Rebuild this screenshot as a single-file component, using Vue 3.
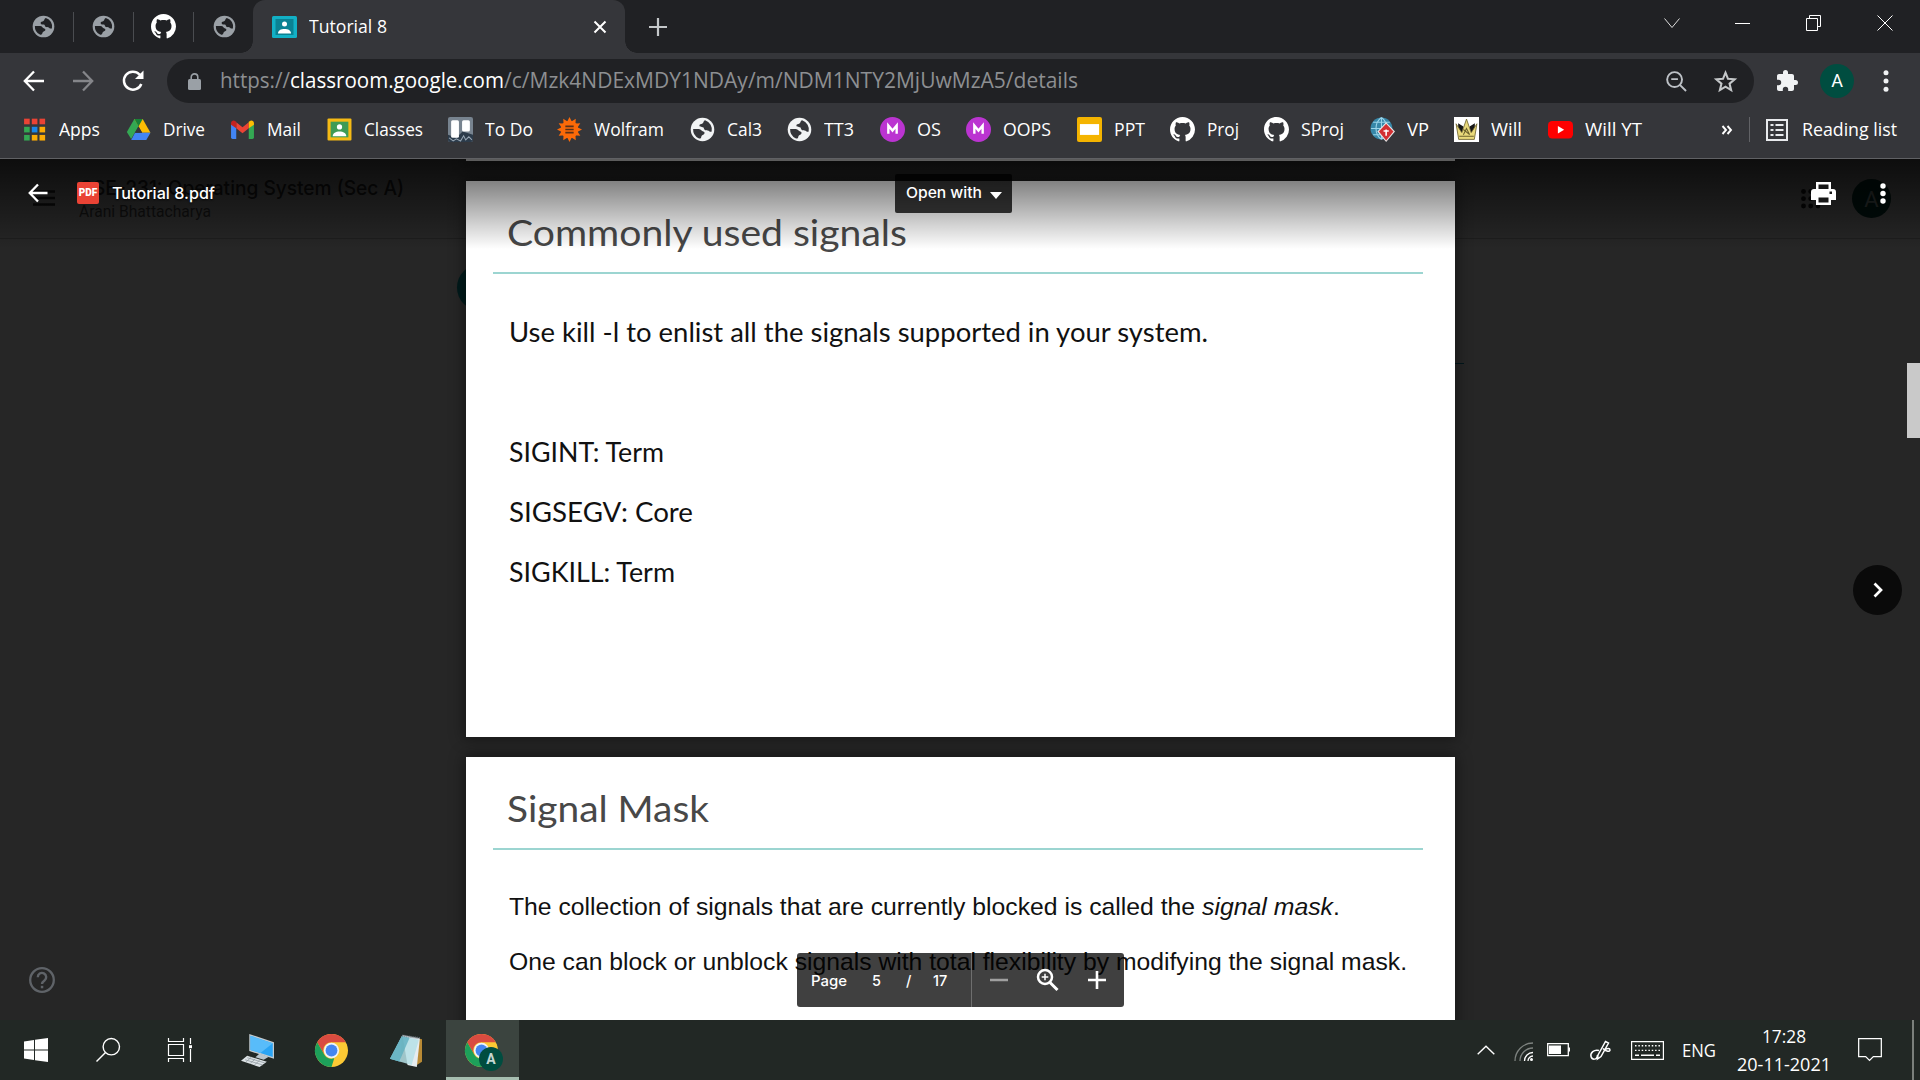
<script setup>
// Condenses or widens a label so that it takes up the given width in pixels.
const vFit = {
  mounted(el, { value }) {
    const natural = el.getBoundingClientRect().width
    el.style.width = value + 'px'
    el.style.transform = `scaleX(${value / natural})`
  },
}

const cat = 'M8 0C3.58 0 0 3.58 0 8c0 3.54 2.29 6.53 5.47 7.59.4.07.55-.17.55-.38 0-.19-.01-.82-.01-1.49-2.01.37-2.53-.49-2.69-.94-.09-.23-.48-.94-.82-1.13-.28-.15-.68-.52-.01-.53.63-.01 1.08.58 1.23.82.72 1.21 1.87.87 2.33.66.07-.52.28-.87.51-1.07-1.78-.2-3.64-.89-3.64-3.95 0-.87.31-1.59.82-2.15-.08-.2-.36-1.02.08-2.12 0 0 .67-.21 2.2.82.64-.18 1.32-.27 2-.27s1.36.09 2 .27c1.53-1.04 2.2-.82 2.2-.82.44 1.1.16 1.92.08 2.12.51.56.82 1.27.82 2.15 0 3.07-1.87 3.75-3.65 3.95.29.25.54.73.54 1.48 0 1.07-.01 1.93-.01 2.2 0 .21.15.46.55.38A8.01 8.01 0 0 0 16 8c0-4.42-3.58-8-8-8z'
const github = `<path transform="scale(1.5)" fill="#fff" d="${cat}"/>`
const globe = (c, bg) => `<circle cx="12" cy="12" r="11.300" fill="${c}"/><path fill="${bg}" d="M14.500 3.200A9.200 9.200 0 0 1 20.800 14c-1.300.6-2.300-.2-3-.8-1-.8-2.800-.2-3.800-1-.9-.9-.4-2.300-1.700-2.400-1.500-.1-3 .2-3.300-1.300C8.800 7 10.700 7 12 6.300c1.200-.7.8-2.800 2.500-3.100z"/><path fill="${bg}" d="M3 11.500h5.500c2.300 0 2.600 2.300 4.200 2.500 1.700.2 1.600 2.200.4 2.800-1.500.7-2 1-2.300 2.300-.2 1.300-1.300 1.900-2.600 1.200A9.300 9.300 0 0 1 3 11.500z"/>`
const meet = '<circle cx="12" cy="12" r="12" fill="#bb34d1"/><path d="M8 16V8.200L12 13l4-4.800V16" fill="none" stroke="#fff" stroke-width="2.300"/>'
const chrome = '<circle cx="12" cy="12" r="12" fill="#fcc934"/><path fill="#d94b40" d="M1.600 6A12 12 0 0 1 22.400 6H12a6 6 0 0 0-5.200 9z"/><path fill="#1da05a" d="M1.600 6 6.800 15a6 6 0 0 0 7.200 2.700L12 24A12 12 0 0 1 1.600 6z"/><circle cx="12" cy="12" r="5.600" fill="#f1f3f4"/><circle cx="12" cy="12" r="4.300" fill="#4586f0"/>'
const wolf = Array.from({ length: 12 }, (_, i) => `<path d="M9 6 12 0l3 6z" transform="rotate(${i * 30} 12 12)"/>`).join('')

const bookmarks = [
  { name: 'Apps', width: 104, text: 41, icon: ['#ea4335', '#34a853', '#34a853'].map((c, r) => [c, ['#ea4335', '#1a86e8', '#fbab05'][r], ['#ea4335', '#fbab05', '#fbab05'][r]].map((f, k) => `<rect x="${2 + k * 7.4}" y="${1.600 + r * 7.800}" width="5.400" height="5.400" fill="${f}"/>`).join('')).join('') },
  { name: 'Drive', width: 104, text: 42, icon: '<path fill="#34a853" d="M8 2h8L5 21 .8 14.500z"/><path fill="#fbbc04" d="M8 2h8l7.500 13h-8z"/><path fill="#4285f4" d="M8.700 15h14.800l-4 7H5z"/><path fill="#35363a" d="m12 9 3.500 6H8.600z"/><path fill="#188038" d="M8 2h8l-4 7z"/>' },
  { name: 'Mail', width: 97, text: 34, icon: '<path fill="#4285f4" d="M1 6.500 6 10v11H2.500A1.500 1.500 0 0 1 1 19.500z"/><path fill="#34a853" d="M18 10l5-3.500v13a1.500 1.500 0 0 1-1.500 1.500H18z"/><path fill="#ea4335" d="m6 5 6 4.800L18 5v5.800l-6 4.800-6-4.800z"/><path fill="#c5221f" d="M1 6c0-2.400 2.500-3.300 4.200-2L6 4.600v6.200L1 7.500z"/><path fill="#fbbc04" d="M23 6c0-2.400-2.500-3.300-4.200-2l-.8.6v6.200l5-3.300z"/>' },
  { name: 'Classes', width: 121, text: 59, icon: '<rect x=".5" y="1.500" width="23" height="21" rx="1" fill="#f5ba15"/><rect x="3.500" y="4.500" width="17" height="15" fill="#3f9b56"/><circle cx="12" cy="9.500" r="2.500" fill="#fff"/><path fill="#fff" d="M5.500 18.500c0-3 3-4.500 6.500-4.500s6.500 1.500 6.500 4.500z"/>' },
  { name: 'To Do', width: 109, text: 48, icon: '<rect width="24" height="24" rx="2" fill="#77838f"/><path fill="#2c3b4a" d="M0 17 8 20 14 14l10 3v5a2 2 0 0 1-2 2H2a2 2 0 0 1-2-2z"/><path d="m1 20 4 3 3-2 4 2 3-5 2 4 3-3 3 3" stroke="#96a5b3" fill="none"/><rect x="3" y="3" width="7.500" height="17" rx="1.500" fill="#fff"/><rect x="13.500" y="3" width="7.500" height="11" rx="1.500" fill="#fff"/>' },
  { name: 'Wolfram', width: 133, text: 70, icon: `<g fill="#fb6a09"><circle cx="12" cy="12" r="8.500"/>${wolf}</g><path d="M8 9h8M8 12h8M8 15h8" stroke="#5a3118" stroke-width="1.500"/>` },
  { name: 'Cal3', width: 97, text: 35, icon: globe('#f1f3f4', '#35363a') },
  { name: 'TT3', width: 93, text: 30, icon: globe('#f1f3f4', '#35363a') },
  { name: 'OS', width: 86, text: 24, icon: meet },
  { name: 'OOPS', width: 111, text: 48, icon: meet },
  { name: 'PPT', width: 93, text: 31, icon: '<rect width="24" height="24" rx="2" fill="#f4b400"/><rect x="2.800" y="6.800" width="18.400" height="10.400" fill="#fff"/>' },
  { name: 'Proj', width: 94, text: 32, icon: github },
  { name: 'SProj', width: 106, text: 43, icon: github },
  { name: 'VP', width: 84, text: 22, icon: '<circle cx="11" cy="11" r="10.500" fill="#3787a8"/><path d="M1 11h20M11 .5v21M3 5h16M3 17h16M11 .5c-7 5-7 16 0 21M11 .5c7 5 7 16 0 21" fill="none" stroke="#9bd5ea"/><path fill="#e8e8e8" d="m15.500 5 8.500 9-8.500 10L7 14z"/><path fill="#d22f32" d="m15.500 6.500 7 7.500-7 8.500-7-8.500z"/><path d="M15.500 18v-6m-2.500 1.500h5" stroke="#fff" stroke-width="1.500"/>' },
  { name: 'Will', width: 94, text: 31, icon: '<path fill="#fff" d="M0 0h24v24H0z"/><path fill="#171717" d="m4 6 5 3-1 6-4-2zM20 6l-5 3 1 6 4-2z"/><path fill="#eada7b" stroke="#6c622c" stroke-width=".8" d="M2 6.500 7.500 15 12 2l4.500 13L22 6.500 19.500 21.500h-15z"/><path d="M5 18.500h14M9 17l3-6 3 6m-6-5 6 5" stroke="#6c622c" fill="none"/>' },
  { name: 'Will YT', width: 130, text: 57, icon: '<rect y="3.800" width="24" height="16.800" rx="4" fill="#f00"/><path fill="#fff" d="m9.500 8.600 6 3.600-6 3.600z"/>' },
]

const pinned = [
  { icon: globe('#9aa0a6', '#202124') },
  { icon: globe('#9aa0a6', '#202124') },
  { icon: github },
  { icon: globe('#9aa0a6', '#202124') },
]

const signals = [
  { text: 'Use kill -l to enlist all the signals supported in your system.', width: 699 },
  { text: '\u00a0', width: 8 },
  { text: 'SIGINT: Term', width: 155 },
  { text: 'SIGSEGV: Core', width: 184 },
  { text: 'SIGKILL: Term', width: 166 },
]
</script>

<template>
  <div class="screen">
    <header class="browser">
      <div class="tabs">
        <div class="pins">
          <div v-for="(p, i) in pinned" :key="i" class="pin">
            <svg :class="{ big: i === 2 }" viewBox="0 0 24 24" v-html="p.icon" />
          </div>
        </div>
        <div class="tab">
          <svg class="fav" viewBox="0 0 25 22"><rect width="25" height="22" rx="1.500" fill="#12b0c5" /><rect x="3.500" y="3" width="18" height="16" fill="#0a8293" /><circle cx="12.500" cy="8" r="2.500" fill="#fff" /><path d="M6 17.500c0-3.300 3-4.500 6.500-4.500s6.500 1.200 6.500 4.500z" fill="#fff" /></svg>
          <span v-fit="78" class="tab-title">Tutorial 8</span>
          <svg class="tab-x" viewBox="0 0 14 14"><path d="m1.500 1.500 11 11m0-11-11 11" stroke="#fff" stroke-width="2" /></svg>
        </div>
        <svg class="plus" viewBox="0 0 18 18"><path d="M9 0v18M0 9h18" stroke="#c4c7c9" stroke-width="2.200" /></svg>
        <div class="window">
          <svg viewBox="0 0 16 16"><path d="m.5 3.500 7.500 9 7.500-9" fill="none" stroke="#ddd" /></svg>
          <svg viewBox="0 0 16 16"><path d="M0 8.500h15" stroke="#fff" /></svg>
          <svg viewBox="0 0 16 16"><path d="M.5 3.500h11v12H.500zM3.500 3.500v-3h11v11h-3" fill="none" stroke="#fff" /></svg>
          <svg viewBox="0 0 16 16"><path d="m.5.5 15 15m0-15-15 15" stroke="#fff" /></svg>
        </div>
      </div>

      <div class="toolbar">
        <div class="nav">
          <svg viewBox="0 0 24 24"><path d="M22 12H3m9-9.500L2.800 12l9.200 9.500" fill="none" stroke="#fff" stroke-width="2.300" /></svg>
          <svg viewBox="0 0 24 24"><path d="M2 12h19m-9-9.500 9.200 9.500-9.200 9.500" fill="none" stroke="#85868a" stroke-width="2.300" /></svg>
          <svg viewBox="-1 0 24 24"><path d="M20.300 15A9 9 0 1 1 18.500 5.500l2 2" fill="none" stroke="#fff" stroke-width="2.500" /><path d="M22.500 1.500V10H14z" fill="#fff" /></svg>
        </div>
        <div class="omnibox">
          <svg class="lock" viewBox="0 0 13 17"><rect y="6" width="13" height="11" rx="1.500" fill="#9aa0a6" /><path d="M3.200 7V4.200a3.300 3.300 0 0 1 6.600 0V7" fill="none" stroke="#9aa0a6" stroke-width="1.600" /></svg>
          <div class="url"><span v-fit="70">https://</span><span v-fit="214" class="host">classroom.google.com</span><span v-fit="574">/c/Mzk4NDExMDY1NDAy/m/NDM1NTY2MjUwMzA5/details</span></div>
          <svg class="ob-icon" viewBox="0 0 22 22"><circle cx="9" cy="9" r="7.800" fill="none" stroke="#bdc1c6" stroke-width="2" /><path d="m14.500 14.500 6.500 6.500M5.500 8.500h7" stroke="#bdc1c6" stroke-width="2" /></svg>
          <svg class="star" viewBox="0 0 24 24"><path d="m12 3.500 2.400 5.900 6.400.5-4.900 4.200 1.500 6.200-5.400-3.300-5.400 3.300 1.500-6.200-4.900-4.200 6.400-.5z" fill="none" stroke="#c4c7c9" stroke-width="2" /></svg>
        </div>
        <svg class="puzzle" viewBox="1 1 22 22"><path fill="#f1f3f4" d="M20.500 11H19V7c0-1.100-.9-2-2-2h-4V3.500a2.500 2.500 0 0 0-5 0V5H4c-1.100 0-1.990.9-1.990 2v3.800H3.500a2.700 2.700 0 0 1 0 5.400H2V20c0 1.100.9 2 2 2h3.800v-1.500a2.700 2.700 0 0 1 5.400 0V22H17c1.100 0 2-.9 2-2v-4h1.500a2.500 2.500 0 0 0 0-5z" /></svg>
        <div class="avatar">A</div>
        <svg class="kebab" viewBox="0 0 6 22"><circle cx="3" cy="2.800" r="2.500" /><circle cx="3" cy="11" r="2.500" /><circle cx="3" cy="19.200" r="2.500" /></svg>
      </div>

      <div class="bookmarks">
        <div v-for="b in bookmarks" :key="b.name" class="bm" :style="{ width: b.width + 'px' }">
          <svg viewBox="0 0 24 24" v-html="b.icon" />
          <span v-fit="b.text">{{ b.name }}</span>
        </div>
        <svg class="more" viewBox="0 0 12 12"><path d="m1.500 2 3.500 4-3.500 4M6.500 2l3.500 4-3.500 4" fill="none" stroke="#fff" stroke-width="1.900" /></svg>
        <i class="bm-sep" />
        <svg class="list" viewBox="0 0 22 22"><path d="M1 1h20v20H1z" fill="none" stroke="#e8eaed" stroke-width="2" /><path d="M4.500 6h3m2 0h8m-13 5h3m2 0h8m-13 5h3m2 0h8" stroke="#e8eaed" stroke-width="2" /></svg>
        <span v-fit="95">Reading list</span>
      </div>
    </header>

    <main class="viewer">
      <div class="ghost-line" />
      <div class="ghost-disc" />
      <div class="ghost-dash" />
      <svg class="ghost-menu" viewBox="0 0 22 16"><path d="M0 1.500h22M0 8h22M0 14.500h22" stroke="#080808" stroke-width="2.600" /></svg>
      <div class="ghost-title"><span v-fit="325">CSE-231: Operating System (Sec A)</span></div>
      <div class="ghost-name"><span v-fit="132">Arani Bhattacharya</span></div>
      <svg class="ghost-apps" viewBox="0 0 20 20"><g fill="#050505"><template v-for="y in [2.500, 9.700, 17]" :key="y"><circle v-for="x in [2.500, 9.700, 17]" :key="x" :cx="x" :cy="y" r="2.400" /></template></g></svg>
      <div class="ghost-avatar">A</div>

      <div class="pages">
        <section class="page sliver" />
        <section class="page">
          <h1><span v-fit="400">Commonly used signals</span></h1>
          <hr>
          <div class="lines">
            <p v-for="s in signals" :key="s.text"><span v-fit="s.width">{{ s.text }}</span></p>
          </div>
        </section>
        <section class="page">
          <h1><span v-fit="202">Signal Mask</span></h1>
          <hr>
          <div class="lines arial">
            <p><span v-fit="693">The collection of signals that are currently blocked is called the&nbsp;</span><em v-fit="131">signal mask</em>.</p>
            <p><span v-fit="898">One can block or unblock signals with total flexibility by modifying the signal mask.</span></p>
          </div>
        </section>
      </div>

      <div class="shade" />
      <div class="file">
        <svg class="back" viewBox="0 0 21 20"><path d="M20.500 10H2m8.500-9L1.800 10l8.700 9" fill="none" stroke="#fff" stroke-width="2.400" /></svg>
        <span class="pdf">PDF</span>
        <span v-fit="103" class="file-name">Tutorial 8.pdf</span>
      </div>
      <div class="open"><span v-fit="76">Open with</span><i /></div>
      <svg class="print" viewBox="0 0 25 23"><path fill="#fff" d="M5 0h15v7h2a3 3 0 0 1 3 3v8h-5v5H5v-5H0v-8a3 3 0 0 1 3-3h2z" /><path fill="#171717" d="M7.500 2.500h10V7h-10zM7.500 15.500h10v5h-10zM18.500 9.500h2.500v2.500h-2.500z" /></svg>
      <svg class="dots" viewBox="0 0 6 22"><circle cx="3" cy="3" r="2.700" /><circle cx="3" cy="10.500" r="2.700" /><circle cx="3" cy="18" r="2.700" /></svg>

      <div class="next"><svg viewBox="0 0 10 16"><path d="m1.500 1.500 6.500 6.500-6.500 6.500" fill="none" stroke="#fff" stroke-width="2.700" /></svg></div>
      <div class="thumb" />
      <svg class="help" viewBox="0 0 26 26"><circle cx="13" cy="13" r="11.800" fill="none" stroke="#5f6368" stroke-width="2.300" /><path d="M8.800 10.200a4.200 4.200 0 1 1 6.700 3.300C14 14.600 13 15.200 13 17" fill="none" stroke="#5f6368" stroke-width="2.400" /><path d="M11.800 18.800h2.500v2.500h-2.500z" fill="#5f6368" /></svg>

      <div class="pager">
        <div class="pager-nums"><span v-fit="36" class="w1">Page</span><span class="w2">5</span><span class="w3">/</span><span class="w4">17</span></div>
        <div class="pager-zoom">
          <svg viewBox="0 0 24 24"><path d="M3 12h18" stroke="#a0a0a0" stroke-width="2.500" /></svg>
          <svg viewBox="0 0 24 24"><circle cx="9" cy="9" r="7" fill="none" stroke="#fff" stroke-width="2.500" /><path d="m14 14.500 7.500 7.500" stroke="#fff" stroke-width="3" /><path d="M9 5.700v6.600M5.700 9h6.600" stroke="#fff" stroke-width="1.500" /></svg>
          <svg viewBox="0 0 24 24"><path d="M3 12h18M12 3v18" stroke="#fff" stroke-width="2.600" /></svg>
        </div>
      </div>
    </main>

    <footer class="taskbar">
      <div class="apps">
        <div class="app"><svg viewBox="0 0 24 24"><path fill="#fff" d="M0 3.500 10 2v9.500H0zM11 1.800 24 0v11.500H11zM0 12.500h10V22L0 20.500zM11 12.500h13V24l-13-1.800z" /></svg></div>
        <div class="app"><svg viewBox="0 0 24 24"><circle cx="15.300" cy="8.700" r="8.200" fill="none" stroke="#fff" stroke-width="1.400" /><path d="M9.500 14.500.5 23.500" stroke="#fff" stroke-width="1.500" /></svg></div>
        <div class="app"><svg viewBox="0 0 24 24"><path d="M.5 0v3.500h15V0M.5 6.500h15v11H.500zM.5 24v-3.500h15V24M22.500 0v6M22.500 11v13" fill="none" stroke="#fff" stroke-width="1.200" /><path d="M21 7.200h3v3h-3z" fill="#fff" /></svg></div>
        <div class="app wide"><svg viewBox="0 0 32 32"><path fill="#c2cacf" d="m8 0 24 8v16L8 16.500z" /><path fill="#2aa4f4" d="m9.200 1.700 21.600 7.200v13.500L9.200 15.400z" /><path fill="#58bcfa" d="m9.200 1.700 21.600 7.200-12 9.500-9.600-3z" /><path fill="#bac5cc" d="m18 19 9 3-5 3-8-2.500z" /><path fill="#dde3e6" d="m6 21 19 6-7 5L0 26z" /><path d="m4 25 17 5M6 23l17 5M10 22.500 5 27m9-3-5 4.500m9-3-5 4.500" stroke="#8d979d" stroke-width=".7" /></svg></div>
        <div class="app wide"><svg viewBox="0 0 24 24" v-html="chrome" /></div>
        <div class="app wide"><svg viewBox="0 0 32 32"><path fill="#b98a35" d="m27 4 4 1v22l-5 3z" /><path fill="#e6ecef" d="m12 1 17 3-3 28-9-2z" /><path fill="#2f7f92" d="M11.500 2 0 24l10 3z" /><path fill="#b5e0e6" d="m11.500 2 16.500 3.500L21 30 0 24z" opacity=".85" /><path fill="#5eafbf" d="M11.500 2 0 24l9 2.600L19 3.600z" opacity=".8" /><path d="M12 1.500 29 4" stroke="#66717a" stroke-width="2" stroke-dasharray="1 1" /></svg></div>
        <div class="app wide current"><svg viewBox="0 0 24 24" v-html="chrome" /><b>A</b></div>
      </div>
      <div class="tray">
        <svg class="t-up" viewBox="0 0 18 10"><path d="m.7 9.300 8.300-8 8.300 8" fill="none" stroke="#fff" stroke-width="1.400" /></svg>
        <svg class="t-wifi" viewBox="0 0 19 19"><g fill="none" stroke-width="1.300"><path d="M1 19A18 18 0 0 1 19 1M6 19A13 13 0 0 1 19 6" stroke="#7d827f" /><path d="M10.500 19a8.500 8.500 0 0 1 8.500-8.500M14 19a5 5 0 0 1 5-5" stroke="#fff" /></g><circle cx="17.500" cy="17.500" r="1.500" fill="#fff" /></svg>
        <svg class="t-bat" viewBox="0 0 23 14"><path d="M.7.700h20.600v12H.700z" fill="none" stroke="#fff" stroke-width="1.300" /><path d="M2 2.500h12v8.500H2zM21.500 4.500H23v4h-1.500z" fill="#fff" /></svg>
        <svg class="t-pen" viewBox="0 0 21 21"><path d="m8 15 7.500-13.500 3 1.500L11 16.500l-3.500 2.500zM9 10.500C4 9 0 13 1 16.500s6 4 6.500-1.500M13 8.500c3 3.500 7 3.500 7 1.500 0-1.800-3-2-5 0" fill="none" stroke="#fff" stroke-width="1.500" /></svg>
        <svg class="t-kb" viewBox="0 0 33 19"><path d="M.6.600h31.800v17.800H.600z" fill="none" stroke="#fff" stroke-width="1.200" /><path d="M4 4.800h25M4 9.400h25" stroke="#fff" stroke-width="1.400" stroke-dasharray="1.500 1.850" /><path d="M4 14.200h4m2 0h13m2 0h4" stroke="#fff" stroke-width="1.400" /></svg>
        <span v-fit="34" class="eng">ENG</span>
        <div class="clock"><span v-fit="44">17:28</span><span v-fit="94">20-11-2021</span></div>
        <svg class="t-note" viewBox="0 0 25 25"><path d="M.7.700h23.600v18.600H16l-4 4-4-4H.700z" fill="none" stroke="#fff" stroke-width="1.300" /></svg>
        <i class="desk" />
      </div>
    </footer>
  </div>
</template>

<style>
body { margin: 0; background: #262626; overflow: hidden; }
</style>

<style scoped>
.screen { width: 1920px; height: 1080px; display: flex; flex-direction: column; overflow: hidden; font-family: "Open Sans", "Noto Sans", sans-serif; color: #fff; }
.screen span { display: inline-block; white-space: nowrap; transform-origin: 0 50%; flex: none; }
svg { display: block; flex: none; overflow: visible; }

.browser { height: 158px; background: #35363a; border-bottom: 1px solid #606164; flex: none; display: flex; flex-direction: column; }
.tabs { height: 53px; background: #202124; display: flex; align-items: center; flex: none; }
.pins { display: flex; width: 253px; padding-left: 14px; box-sizing: border-box; }
.pin { width: 60px; height: 30px; flex: none; display: flex; align-items: center; justify-content: center; box-sizing: border-box; border-right: 1px solid #4a4c50; }
.pin:last-child { border-right: 0; }
.pin svg { width: 23px; height: 23px; }
.pin svg.big { width: 25px; height: 25px; }
.tab { position: relative; width: 372px; height: 53px; background: #35363a; border-radius: 12px 12px 0 0; display: flex; align-items: center; box-sizing: border-box; padding: 0 18px 0 19px; flex: none; }
.tab::before, .tab::after { content: ""; position: absolute; bottom: 0; width: 12px; height: 12px; }
.tab::before { left: -12px; background: radial-gradient(circle at 0 0, #202124 11.500px, #35363a 12px); }
.tab::after { right: -12px; background: radial-gradient(circle at 100% 0, #202124 11.500px, #35363a 12px); }
.fav { width: 25px; height: 22px; }
.tab-title { font-size: 18px; margin-left: 12px; line-height: 24px; margin-top: -2px; }
.tab-x { width: 14px; height: 14px; margin-left: auto; }
.plus { width: 18px; height: 18px; margin-left: 24px; }
.window { margin-left: auto; display: flex; gap: 55px; padding-right: 27px; margin-top: -8px; }
.window svg { width: 16px; height: 16px; }

.toolbar { height: 56px; display: flex; align-items: center; flex: none; }
.nav { display: flex; width: 167px; padding-left: 22px; gap: 25px; box-sizing: border-box; }
.nav svg { width: 24px; height: 24px; }
.omnibox { width: 1587px; height: 44px; border-radius: 22px; background: #202124; display: flex; align-items: center; box-sizing: border-box; padding-left: 21px; }
.lock { width: 13px; height: 17px; margin-right: 18px; }
.url { font-size: 21.500px; line-height: 30px; color: #8d8f92; display: flex; margin: -2px 0 0 1px; }
.host { color: #fff; }
.ob-icon { width: 21px; height: 21px; margin-left: auto; }
.star { width: 25px; height: 25px; margin: 0 16px 0 26px; }
.puzzle { width: 22px; height: 22px; margin-left: 22px; }
.avatar { width: 34px; height: 34px; border-radius: 50%; background: #004d40; margin-left: 22px; text-align: center; font: 18px/34px Roboto, sans-serif; }
.kebab { width: 6px; height: 22px; fill: #f1f3f4; margin-left: 29px; }

.bookmarks { height: 41px; display: flex; align-items: center; padding-left: 22px; font-size: 18px; line-height: 24px; }
.bm { display: flex; align-items: center; flex: none; gap: 12px; }
.bm svg { width: 25px; height: 25px; }
.bm span, .bookmarks > span { margin-top: -1px; }
.more { width: 12px; height: 12px; margin-left: 43px; }
.bm-sep { width: 1px; height: 25px; background: #616266; margin-left: 16px; }
.list { width: 22px; height: 22px; margin: 0 14px 0 16px; }

.viewer { position: relative; height: 861px; background: #262626; overflow: hidden; flex: none; }
.ghost-line { position: absolute; top: 79px; left: 0; right: 0; height: 1px; background: #1e1e1e; }
.ghost-disc { position: absolute; left: 457px; top: 105px; width: 47px; height: 47px; border-radius: 50%; background: #001a1b; }
.ghost-dash { position: absolute; left: 1400px; top: 204px; width: 64px; height: 1px; background: #00161b; }
.ghost-menu { position: absolute; left: 33px; top: 31px; width: 22px; height: 16px; }
.ghost-title { position: absolute; left: 79px; top: 14px; font: 500 20px/30px Inter, sans-serif; color: #090909; }
.ghost-name { position: absolute; left: 79px; top: 42px; font: 16px/22px Roboto, sans-serif; color: #0e0e0e; }
.ghost-apps { position: absolute; left: 1801px; top: 30px; width: 20px; height: 20px; }
.ghost-avatar { position: absolute; left: 1852px; top: 20px; width: 39px; height: 39px; border-radius: 50%; background: #000b09; color: #202423; font: 22px/42px Roboto, sans-serif; text-align: center; }

.pages { position: relative; width: 989px; margin: 0 0 0 466px; display: flex; flex-direction: column; }
.page { height: 556px; background: #fff; margin-bottom: 20px; color: #111; box-sizing: border-box; padding: 29px 32px 0 27px; box-shadow: 0 0 14px 2px rgba(0, 0, 0, .4); flex: none; }
.sliver { height: 2px; padding: 0; }
h1 { margin: 0 0 18px 14px; height: 44px; font: 400 36px/44px Lato, sans-serif; color: #484848; }
hr { margin: 0; border: 0; height: 2px; background: #9cd5d1; }
.lines { padding: 28px 0 0 16px; }
.lines p { margin: 0; height: 60px; font: 26px/60px Lato, sans-serif; white-space: nowrap; }
.lines.arial { padding-top: 29px; }
.lines.arial p { height: 55px; font: 24.600px/55px "Liberation Sans", Arial, sans-serif; }
em { display: inline-block; transform-origin: 0 50%; }

.shade { position: absolute; inset: 0 0 auto 0; height: 90px; background: linear-gradient(rgba(0, 0, 0, .65), rgba(0, 0, 0, 0)); }
.file { position: absolute; left: 28px; top: 20px; height: 28px; display: flex; align-items: center; }
.back { width: 20px; height: 20px; }
.pdf { width: 22px; height: 22px; border-radius: 2px; background: #ea4335; margin: 0 13px 0 29px; font: 900 10px/22px Roboto, sans-serif; text-align: center; }
.file-name { font: 500 16.500px/28px Inter, sans-serif; text-shadow: 0 1px 2px #000; }
.open { position: absolute; left: 895px; top: 15px; width: 117px; height: 39px; box-sizing: border-box; border-radius: 2px; background: rgba(0, 0, 0, .77); padding: 0 0 2px 11px; display: flex; align-items: center; font: 500 15px/20px Inter, sans-serif; }
.open i { border: 6.500px solid transparent; border-top: 7px solid #fff; border-bottom: 0; margin: 6px 0 0 8px; }
.print { position: absolute; left: 1811px; top: 23px; width: 25px; height: 23px; }
.dots { position: absolute; left: 1880px; top: 24px; width: 6px; height: 22px; fill: #fff; }
.next { position: absolute; left: 1853px; top: 406px; width: 49px; height: 50px; border-radius: 50%; background: #0a0a0a; display: flex; align-items: center; justify-content: center; }
.next svg { width: 10px; height: 16px; }
.thumb { position: absolute; right: 0; top: 204px; width: 13px; height: 75px; background: #c9c9c9; }
.help { position: absolute; left: 29px; top: 808px; width: 26px; height: 26px; }
.pager { position: absolute; left: 797px; top: 794px; width: 327px; height: 54px; border-radius: 3px; background: rgba(0, 0, 0, .75); display: flex; font: 500 14.500px/54px Inter, sans-serif; }
.pager-nums { display: flex; width: 175px; border-right: 1px solid #6e6e6e; padding-left: 14px; box-sizing: border-box; padding-top: 1px; }
.w1 { margin-right: 25px; }
.w2 { width: 34px; }
.w3 { width: 27px; }
.pager-zoom { flex: 1; display: flex; align-items: center; justify-content: space-between; padding: 0 15px 0 15px; }
.pager-zoom svg { width: 24px; height: 24px; }

.taskbar { height: 60px; background: #222825; display: flex; justify-content: space-between; flex: none; }
.apps { display: flex; }
.app { width: 72px; display: flex; align-items: center; justify-content: center; }
.app svg { width: 24px; height: 24px; }
.app.wide { width: 74px; }
.app:nth-child(4) { margin-left: 4px; }
.app:nth-child(5) { width: 75px; }
.app.wide svg { width: 33px; height: 33px; }
.app.current { position: relative; background: #3b443f; box-shadow: inset 0 -3px #a6beb0; width: 73px; margin-left: 3px; }
.app.current svg { margin-right: 2px; }
.current b { position: absolute; left: 33px; top: 27px; width: 24px; height: 24px; border-radius: 50%; background: #004d40; font: 700 14px/25px Roboto, sans-serif; text-align: center; color: #c3d7d2; }
.tray { display: flex; align-items: center; font-size: 18px; }
.t-up { width: 18px; height: 10px; margin-right: 19px; }
.t-wifi { width: 19px; height: 19px; margin: 2px 14px 0 0; }
.t-bat { width: 23px; height: 14px; margin-right: 20px; }
.t-pen { width: 21px; height: 21px; margin-right: 20px; }
.t-kb { width: 33px; height: 19px; margin-right: 18px; }
.eng { margin-right: 20px; }
.clock { width: 95px; display: flex; flex-direction: column; align-items: center; line-height: 28px; margin-right: 27px; }
.t-note { width: 24px; height: 24px; margin-right: 30px; }
.desk { width: 2px; height: 60px; background: #7b807c; margin-right: 6px; }
</style>
